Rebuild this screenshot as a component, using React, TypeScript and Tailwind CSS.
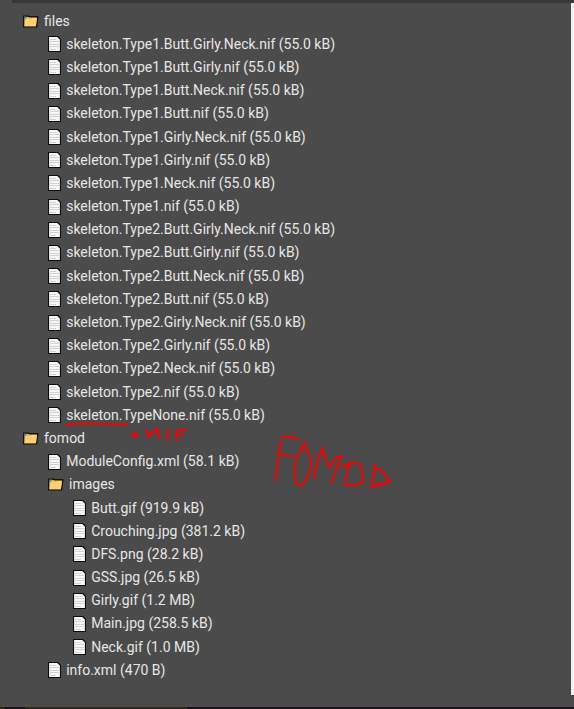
import React from 'react';

interface Entry {
    name: string;
    size?: string;
    depth: number;
}

const ENTRIES: Entry[] = [
    { name: 'files', depth: 0 },
    { name: 'skeleton.Type1.Butt.Girly.Neck.nif', size: '55.0 kB', depth: 1 },
    { name: 'skeleton.Type1.Butt.Girly.nif', size: '55.0 kB', depth: 1 },
    { name: 'skeleton.Type1.Butt.Neck.nif', size: '55.0 kB', depth: 1 },
    { name: 'skeleton.Type1.Butt.nif', size: '55.0 kB', depth: 1 },
    { name: 'skeleton.Type1.Girly.Neck.nif', size: '55.0 kB', depth: 1 },
    { name: 'skeleton.Type1.Girly.nif', size: '55.0 kB', depth: 1 },
    { name: 'skeleton.Type1.Neck.nif', size: '55.0 kB', depth: 1 },
    { name: 'skeleton.Type1.nif', size: '55.0 kB', depth: 1 },
    { name: 'skeleton.Type2.Butt.Girly.Neck.nif', size: '55.0 kB', depth: 1 },
    { name: 'skeleton.Type2.Butt.Girly.nif', size: '55.0 kB', depth: 1 },
    { name: 'skeleton.Type2.Butt.Neck.nif', size: '55.0 kB', depth: 1 },
    { name: 'skeleton.Type2.Butt.nif', size: '55.0 kB', depth: 1 },
    { name: 'skeleton.Type2.Girly.Neck.nif', size: '55.0 kB', depth: 1 },
    { name: 'skeleton.Type2.Girly.nif', size: '55.0 kB', depth: 1 },
    { name: 'skeleton.Type2.Neck.nif', size: '55.0 kB', depth: 1 },
    { name: 'skeleton.Type2.nif', size: '55.0 kB', depth: 1 },
    { name: 'skeleton.TypeNone.nif', size: '55.0 kB', depth: 1 },
    { name: 'fomod', depth: 0 },
    { name: 'ModuleConfig.xml', size: '58.1 kB', depth: 1 },
    { name: 'images', depth: 1 },
    { name: 'Butt.gif', size: '919.9 kB', depth: 2 },
    { name: 'Crouching.jpg', size: '381.2 kB', depth: 2 },
    { name: 'DFS.png', size: '28.2 kB', depth: 2 },
    { name: 'GSS.jpg', size: '26.5 kB', depth: 2 },
    { name: 'Girly.gif', size: '1.2 MB', depth: 2 },
    { name: 'Main.jpg', size: '258.5 kB', depth: 2 },
    { name: 'Neck.gif', size: '1.0 MB', depth: 2 },
    { name: 'info.xml', size: '470 B', depth: 1 },
];

const INDENT = ['pl-[23px]', 'pl-[48px]', 'pl-[73px]'];

const FolderIcon: React.FC = () => (
    <svg width="16" height="13" viewBox="0 0 16 13" className="mr-[5px] shrink-0">
        <path d="M0.6 11.9V1.2H5.5L6.5 1.7H14.7L13.6 11.9Z" fill="#f0bd55" stroke="#101214" strokeWidth="1.4" />
        <path d="M1 5V1.6H4.6Z" fill="#4a7fa5" />
        <path d="M1.4 11.3L3 4.3H7.5L8.8 3H14L12.9 11.3Z" fill="#ffd070" />
    </svg>
);

const FileIcon: React.FC = () => (
    <svg width="13" height="16" viewBox="0 0 13 16" className="mr-[5.2px] shrink-0">
        <path d="M0.5 0.5H9.7L12.5 3.3V15.5H0.5Z" fill="#f7f7f7" stroke="#0c0c0c" strokeWidth="1.2" />
        <path d="M2 3.5H8M2 5.5H11M2 8.5H11M2 10.5H11M2 13.5H8" stroke="#d2d2d2" />
    </svg>
);

const Row: React.FC<{ entry: Entry }> = ({ entry }) => (
    <li className={`flex h-[23.1875px] items-center whitespace-nowrap ${INDENT[entry.depth]}`}>
        {entry.size ? <FileIcon /> : <FolderIcon />}
        <span>{entry.size ? `${entry.name} (${entry.size})` : entry.name}</span>
    </li>
);

// Red pen marks drawn over the tree
const PenMarks: React.FC = () => (
    <svg
        className="pointer-events-none absolute inset-0"
        width="574"
        height="709"
        viewBox="0 0 574 709"
        fill="none"
        stroke="#fb0000"
        strokeWidth="2"
        strokeLinecap="round"
        strokeLinejoin="round"
    >
        <path d="M66.5 425L72 424L92 423.5L110 424.3L127 424.3" />
        <ellipse cx="135" cy="435" rx="3.2" ry="2.6" fill="#fb0000" stroke="none" />
        <path
            d="M146.5 430L148.5 437L151 434L157.5 428.5L159 438M168.5 429.5L167 439.5M176.5 431L176.5 440M176.5 431L180 430L186 429M177 435L183 434.5"
            strokeWidth="2.2"
        />
        <path d="M281.7 436.7H293.5L295 438.5L299 438.7M281.3 441L278.5 455L275.7 481M277.7 454.4H285L286 455.7L293 456" />
        <path d="M302 444L303.7 448L306 442M303.5 446L297 457L294.5 467V476L296 483L299 485H302L306 480L310.7 468V458L308 451L303.5 447" />
        <path d="M314 479L318 459L322.7 448L324 454L329 467.3L337 457L342 456.7L336 470L332 483" />
        <path d="M342 466L347 465.5L355 462.8L360 464L362 470L362.7 482.5L358 484.7H346L345.5 479L350 461" />
        <path d="M374.7 464.5L373.7 475L371.5 487.5L389 482L385 474L380 469L375 469M377 484H384L390 481" />
    </svg>
);

export default function App() {
    return (
        <div className="relative flex h-[709px] w-[574px] flex-col overflow-hidden bg-[#4b4b4b] font-['Roboto',sans-serif] text-[14px] text-[#e6e6e6]">
            <div className="ml-3 h-[3px] shrink-0 bg-[#383838]" />
            <div className="flex flex-1">
                <ul className="flex-1 pt-[6.5px]">
                    {ENTRIES.map((entry, i) => (
                        <Row key={i} entry={entry} />
                    ))}
                </ul>
                <div className="h-[692px] w-[3px] bg-[#f1f1f1]" />
            </div>
            <div className="flex h-[2px] shrink-0 bg-[#161316]">
                <div className="w-[5px] bg-[#2b2b16]" />
                <div className="ml-5 w-[162px] bg-[#2b2b16]" />
            </div>
            <PenMarks />
        </div>
    );
}
